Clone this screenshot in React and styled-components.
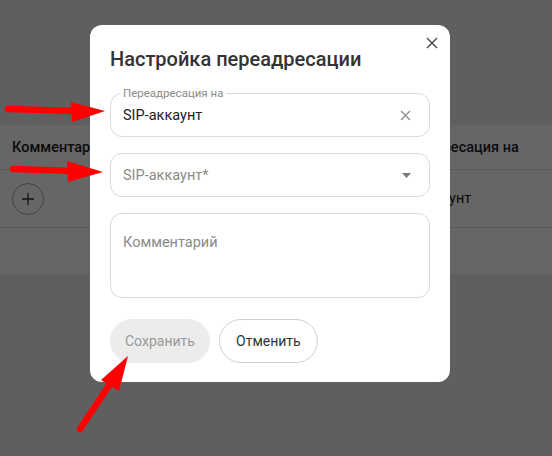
import styled, { createGlobalStyle } from 'styled-components'

const GlobalStyle = createGlobalStyle`
  html, body {
    margin: 0;
    padding: 0;
  }
  body {
    font-family: Roboto, "Liberation Sans", sans-serif;
    background: #ededed;
  }
`

const App = () => {
  return (
    <>
      <GlobalStyle />
      <Page>
        <Table>
          <HeadRow>
            <HeadCell>Комментарий</HeadCell>
            <HeadCell>Переадресация на</HeadCell>
          </HeadRow>
          <BodyRow>
            <Cell>
              <AddButton>
                <svg width="14" height="14" viewBox="0 0 14 14">
                  <path d="M7 1v12M1 7h12" stroke="#333" strokeWidth="1.3" />
                </svg>
              </AddButton>
            </Cell>
            <Cell>SIP-аккаунт</Cell>
          </BodyRow>
          <TableFooter />
        </Table>
      </Page>

      <Overlay>
        <Modal>
          <CloseButton>
            <svg width="12" height="12" viewBox="0 0 12 12">
              <path d="M1 1l10 10M11 1L1 11" stroke="#444" strokeWidth="1.4" />
            </svg>
          </CloseButton>
          <Title>Настройка переадресации</Title>

          <Form>
            <Field>
              <FloatLabel>Переадресация на</FloatLabel>
              <Value>SIP-аккаунт</Value>
              <svg width="11" height="11" viewBox="0 0 11 11">
                <path d="M1 1l9 9M10 1L1 10" stroke="#888" strokeWidth="1.2" />
              </svg>
            </Field>

            <Field>
              <Value $placeholder>SIP-аккаунт*</Value>
              <svg width="9" height="5" viewBox="0 0 9 5">
                <path d="M0 0h9L4.5 5z" fill="#777" />
              </svg>
            </Field>

            <TextArea>
              <Value $placeholder>Комментарий</Value>
            </TextArea>
          </Form>

          <Actions>
            <Button $disabled>Сохранить</Button>
            <Button>Отменить</Button>
          </Actions>
        </Modal>
      </Overlay>

      {/* red annotation arrows */}
      <Annotations width="552" height="456" viewBox="0 0 552 456">
        <g stroke="#ff0000" strokeWidth="6.5" strokeLinecap="round">
          <line x1="8" y1="109" x2="78" y2="111" />
          <line x1="13" y1="169" x2="74" y2="171" />
          <line x1="80" y1="429" x2="112" y2="381" />
        </g>
        <g fill="#ff0000">
          <polygon points="105,111 71,102 72,122" />
          <polygon points="103,172 67,161 68,182" />
          <polygon points="128,356 101,380 119,391" />
        </g>
      </Annotations>
    </>
  )
}

export default App

const Page = styled.div`
  min-height: 100vh;
  padding-top: 125px;
  box-sizing: border-box;
`

const Table = styled.div`
  background: #fff;
`

const HeadRow = styled.div`
  display: grid;
  grid-template-columns: 380px 1fr;
  padding: 0 12px;
  height: 44px;
  align-items: center;
  border-bottom: 1px solid #e2e2e2;
`

const HeadCell = styled.div`
  font-size: 14.5px;
  font-weight: 500;
  color: #222;
  white-space: nowrap;
`

const BodyRow = styled.div`
  display: grid;
  grid-template-columns: 380px 1fr;
  padding: 0 12px;
  height: 57px;
  align-items: center;
  border-bottom: 1px solid #e2e2e2;
`

const Cell = styled.div`
  font-size: 14.5px;
  color: #222;
`

const AddButton = styled.div`
  width: 30px;
  height: 30px;
  border: 1px solid #aaa;
  border-radius: 50%;
  display: flex;
  align-items: center;
  justify-content: center;
`

const TableFooter = styled.div`
  height: 46px;
`

const Overlay = styled.div`
  position: fixed;
  inset: 0;
  background: rgba(0, 0, 0, 0.6);
  display: flex;
  align-items: flex-start;
  padding: 25px 0 0 90px;
`

const Modal = styled.div`
  position: relative;
  width: 360px;
  box-sizing: border-box;
  background: #fff;
  border-radius: 12px;
  padding: 20px 20px 19px;
`

const CloseButton = styled.div`
  position: absolute;
  top: 12px;
  right: 12px;
  width: 12px;
  height: 12px;
  display: flex;
`

const Title = styled.div`
  font-size: 20px;
  font-weight: 500;
  line-height: 28px;
  color: #333;
`

const Form = styled.div`
  display: flex;
  flex-direction: column;
  gap: 16px;
  margin-top: 20px;
`

const Field = styled.div`
  position: relative;
  height: 44px;
  box-sizing: border-box;
  border: 1px solid #dadada;
  border-radius: 12px;
  padding: 0 18px 0 12px;
  display: flex;
  align-items: center;
  justify-content: space-between;
`

const FloatLabel = styled.span`
  position: absolute;
  top: -8px;
  left: 9px;
  padding: 0 3px;
  background: #fff;
  font-size: 11.5px;
  line-height: 14px;
  color: #8a8a8a;
`

const Value = styled.span`
  font-size: 14.5px;
  color: ${p => (p.$placeholder ? '#8a8a8a' : '#222')};
`

const TextArea = styled.div`
  height: 85px;
  box-sizing: border-box;
  border: 1px solid #dadada;
  border-radius: 12px;
  padding: 18px 12px;
`

const Actions = styled.div`
  display: flex;
  gap: 9px;
  margin-top: 21px;
`

const Button = styled.div`
  min-width: 99px;
  height: 44px;
  box-sizing: border-box;
  padding: 0 14px;
  border-radius: 22px;
  display: flex;
  align-items: center;
  justify-content: center;
  font-size: 14px;
  background: ${p => (p.$disabled ? '#ececec' : '#fff')};
  color: ${p => (p.$disabled ? '#9a9a9a' : '#333')};
  border: 1px solid ${p => (p.$disabled ? '#ececec' : '#d0d0d0')};
`

const Annotations = styled.svg`
  position: fixed;
  top: 0;
  left: 0;
  pointer-events: none;
`
